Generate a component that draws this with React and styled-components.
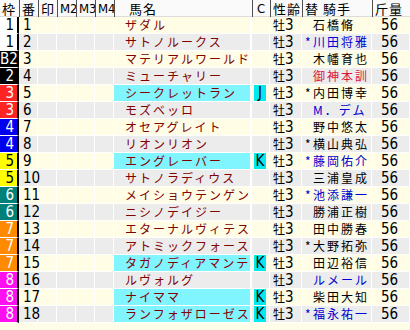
import React from 'react'
import styled, { createGlobalStyle } from 'styled-components'

const GlobalStyle = createGlobalStyle`
  body {
    margin: 0;
    background: #fffde8;
    font-family: "Noto Sans CJK JP", "Noto Sans", sans-serif;
  }
`

const digitFont = '"Liberation Sans Narrow", "DejaVu Sans Condensed", "Noto Sans CJK JP", sans-serif'

const frameColors = {
  1: { bg: '#ffffff', fg: '#000000' },
  2: { bg: '#000000', fg: '#ffffff' },
  3: { bg: '#ff2424', fg: '#ffffff' },
  4: { bg: '#0000f0', fg: '#ffffff' },
  5: { bg: '#ffff00', fg: '#000000' },
  6: { bg: '#008078', fg: '#ffffff' },
  7: { bg: '#ff8a00', fg: '#ffffff' },
  8: { bg: '#ff10f0', fg: '#ffffff' }
}

const jockeyColors = {
  black: '#000000',
  blue: '#0000d0',
  red: '#dc1440'
}

const horses = [
  { waku: 1, num: 1, name: 'ザダル', jockey: '石橋脩', jc: 'black' },
  { waku: 1, num: 2, name: 'サトノルークス', jockey: '川田将雅', mark: true, jc: 'blue' },
  { waku: 2, label: 'B2', num: 3, name: 'マテリアルワールド', jockey: '木幡育也', jc: 'black' },
  { waku: 2, num: 4, name: 'ミューチャリー', jockey: '御神本訓', jc: 'red' },
  { waku: 3, num: 5, name: 'シークレットラン', hl: true, c: 'J', jockey: '内田博幸', mark: true, jc: 'black' },
  { waku: 3, num: 6, name: 'モズベッロ', jockey: 'M．デム', jc: 'blue' },
  { waku: 4, num: 7, name: 'オセアグレイト', jockey: '野中悠太', jc: 'black' },
  { waku: 4, num: 8, name: 'リオンリオン', jockey: '横山典弘', mark: true, jc: 'black' },
  { waku: 5, num: 9, name: 'エングレーバー', hl: true, c: 'K', jockey: '藤岡佑介', mark: true, jc: 'blue' },
  { waku: 5, num: 10, name: 'サトノラディウス', jockey: '三浦皇成', jc: 'black' },
  { waku: 6, num: 11, name: 'メイショウテンゲン', jockey: '池添謙一', mark: true, jc: 'blue' },
  { waku: 6, num: 12, name: 'ニシノデイジー', jockey: '勝浦正樹', jc: 'black' },
  { waku: 7, num: 13, name: 'エターナルヴィテス', jockey: '田中勝春', jc: 'black' },
  { waku: 7, num: 14, name: 'アトミックフォース', jockey: '大野拓弥', mark: true, jc: 'black' },
  { waku: 7, num: 15, name: 'タガノディアマンテ', hl: true, c: 'K', jockey: '田辺裕信', jc: 'black' },
  { waku: 8, num: 16, name: 'ルヴォルグ', jockey: 'ルメール', jc: 'blue' },
  { waku: 8, num: 17, name: 'ナイママ', hl: true, c: 'K', jockey: '柴田大知', jc: 'black' },
  { waku: 8, num: 18, name: 'ランフォザローゼス', hl: true, c: 'K', jockey: '福永祐一', mark: true, jc: 'blue' }
]

const columns = '19px 19px 19px 19px 19px 19px 138px 18px 32px 70px 38px'

export default function App() {
  return (
    <>
      <GlobalStyle />
      <Table>
        <HeaderRow>
          <HeadCell first>枠</HeadCell>
          <HeadCell>番</HeadCell>
          <HeadCell>印</HeadCell>
          <HeadCell latin>M2</HeadCell>
          <HeadCell latin>M3</HeadCell>
          <HeadCell latin>M4</HeadCell>
          <HeadCell pad={14}>馬名</HeadCell>
          <HeadCell latin pad={4}>C</HeadCell>
          <HeadCell>性齢</HeadCell>
          <HeadCell>替 騎手</HeadCell>
          <HeadCell pad={2}>斤量</HeadCell>
        </HeaderRow>
        {horses.map((h, i) => (
          <Row key={h.num} even={i % 2 === 1}>
            <WakuCell {...frameColors[h.waku]}>{h.label || h.waku}</WakuCell>
            <NumCell>{h.num}</NumCell>
            <Cell />
            <Cell />
            <Cell />
            <Cell />
            <NameCell hl={h.hl}>{h.name}</NameCell>
            <Cell>{h.c && <CBadge>{h.c}</CBadge>}</Cell>
            <SexCell>
              牡<Digits>3</Digits>
            </SexCell>
            <JockeyCell color={jockeyColors[h.jc]}>
              <Mark>{h.mark ? '*' : ''}</Mark>
              {h.jockey}
            </JockeyCell>
            <WeightCell>56</WeightCell>
          </Row>
        ))}
      </Table>
    </>
  )
}

const Table = styled.div`
  width: 410px;
  display: flex;
  flex-direction: column;
`

const HeaderRow = styled.div`
  display: grid;
  grid-template-columns: ${columns};
  height: 17px;
  background: #fafafa;
  border-bottom: 1px solid #dcdcdc;
  box-sizing: border-box;
`

const HeadCell = styled.div`
  font-family: ${({ latin }) => (latin ? digitFont : 'inherit')};
  font-size: 13px;
  line-height: 17px;
  color: #000;
  padding-left: ${({ pad }) => (pad != null ? pad : 2)}px;
  border-left: ${({ first }) => (first ? 'none' : '1px solid #505050')};
  white-space: nowrap;
  letter-spacing: ${({ latin }) => (latin ? '0' : '1px')};
`

const Row = styled.div`
  display: grid;
  grid-template-columns: ${columns};
  height: 17px;
  background: ${({ even }) => (even ? '#ececec' : '#fffde6')};
`

const Cell = styled.div`
  border-right: 1px solid #ffffff;
  border-bottom: 1px solid #ffffff;
  box-sizing: border-box;
  font-size: 12px;
  line-height: 16px;
  white-space: nowrap;
`

const WakuCell = styled(Cell)`
  background: ${({ bg }) => bg};
  color: ${({ fg }) => fg};
  border-right: 2px solid #000;
  text-align: right;
  padding-right: 3px;
  font-family: ${digitFont};
  font-size: 15px;
`

const NumCell = styled(Cell)`
  padding-left: 4px;
  font-family: ${digitFont};
  font-size: 15px;
`

const NameCell = styled(Cell)`
  background: ${({ hl }) => (hl ? '#80f4ff' : 'transparent')};
  color: #800000;
  padding-left: 11px;
  letter-spacing: 2px;
  border-right-width: 2px;
`

const CBadge = styled.span`
  display: inline-block;
  margin-left: 2px;
  width: 12px;
  height: 16px;
  background: #00e8f0;
  color: #000;
  font-family: ${digitFont};
  font-size: 15px;
  line-height: 16px;
  text-align: center;
  vertical-align: top;
`

const SexCell = styled(Cell)`
  padding-left: 3px;
`

const Digits = styled.span`
  font-family: ${digitFont};
  font-size: 15px;
`

const JockeyCell = styled(Cell)`
  color: ${({ color }) => color};
  padding-left: 3px;
  letter-spacing: 2px;
`

const Mark = styled.span`
  display: inline-block;
  width: 8px;
  letter-spacing: 0;
  color: inherit;
`

const WeightCell = styled(Cell)`
  padding-left: 9px;
  font-family: ${digitFont};
  font-size: 15px;
`
